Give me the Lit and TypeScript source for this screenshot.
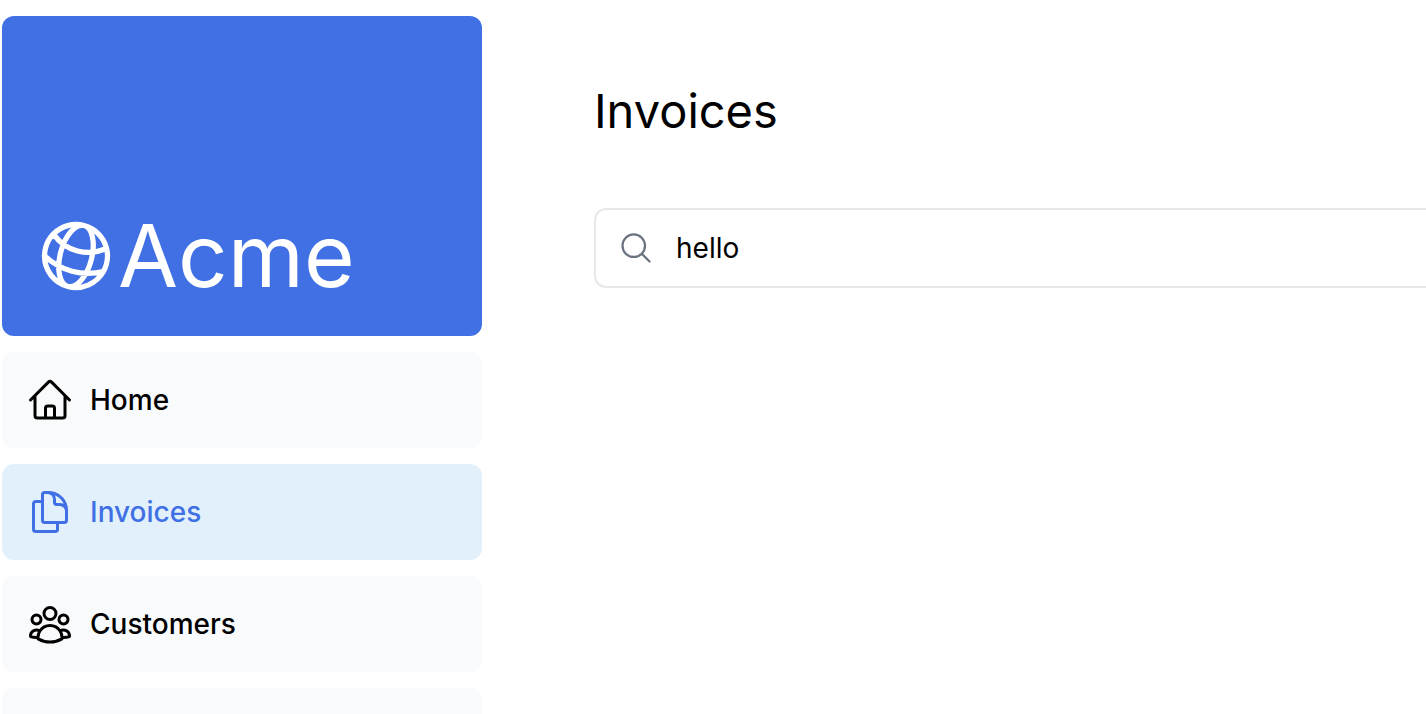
import { LitElement, html, css, svg } from 'lit';
import { customElement } from 'lit/decorators.js';
import { classMap } from 'lit/directives/class-map.js';

const icon = (name: string, paths: string[]) => html`
  <svg class="icon ${name}" viewBox="0 0 24 24" fill="none" stroke="currentColor" stroke-width="1.5"
    stroke-linecap="round" stroke-linejoin="round" aria-hidden="true">
    ${paths.map((d) => svg`<path d=${d}></path>`)}
  </svg>`;

const GLOBE = [
  'M12 21a9.004 9.004 0 0 0 8.716-6.747M12 21a9.004 9.004 0 0 1-8.716-6.747M12 21c2.485 0 4.5-4.03 4.5-9S14.485 3 12 3m0 18c-2.485 0-4.5-4.03-4.5-9S9.515 3 12 3m0 0a8.997 8.997 0 0 1 7.843 4.582M12 3a8.997 8.997 0 0 0-7.843 4.582m15.686 0A11.953 11.953 0 0 1 12 10.5c-2.998 0-5.74-1.1-7.843-2.918m15.686 0A8.959 8.959 0 0 1 21 12c0 .778-.099 1.533-.284 2.253m0 0A17.919 17.919 0 0 1 12 16.5c-3.162 0-6.133-.815-8.716-2.247m0 0A9.015 9.015 0 0 1 3 12c0-1.605.42-3.113 1.157-4.418',
];
const SEARCH = ['m21 21-5.197-5.197m0 0A7.5 7.5 0 1 0 5.196 5.196a7.5 7.5 0 0 0 10.607 10.607Z'];

const LINKS = [
  {
    label: 'Home', href: '#home',
    icon: ['m2.25 12 8.954-8.955c.44-.439 1.152-.439 1.591 0L21.75 12M4.5 9.75v10.125c0 .621.504 1.125 1.125 1.125H9.75v-4.875c0-.621.504-1.125 1.125-1.125h2.25c.621 0 1.125.504 1.125 1.125V21h4.125c.621 0 1.125-.504 1.125-1.125V9.75M8.25 21h8.25'],
  },
  {
    label: 'Invoices', href: '#invoices', active: true,
    icon: ['M15.75 17.25v3.375c0 .621-.504 1.125-1.125 1.125h-9.75a1.125 1.125 0 0 1-1.125-1.125V7.875c0-.621.504-1.125 1.125-1.125H6.75a9.06 9.06 0 0 1 1.5.124m7.5 10.376h3.375c.621 0 1.125-.504 1.125-1.125V11.25c0-4.46-3.243-8.161-7.5-8.876a9.06 9.06 0 0 0-1.5-.124H9.375c-.621 0-1.125.504-1.125 1.125v3.5m7.5 10.375H9.375a1.125 1.125 0 0 1-1.125-1.125v-9.25m12 6.625v-1.875a3.375 3.375 0 0 0-3.375-3.375h-1.5a1.125 1.125 0 0 1-1.125-1.125v-1.5a3.375 3.375 0 0 0-3.375-3.375H9.75'],
  },
  {
    label: 'Customers', href: '#customers',
    icon: ['M18 18.72a9.094 9.094 0 0 0 3.741-.479 3 3 0 0 0-4.682-2.72m.94 3.198.001.031c0 .225-.012.447-.037.666A11.944 11.944 0 0 1 12 21c-2.17 0-4.207-.576-5.963-1.584A6.062 6.062 0 0 1 6 18.719m12 0a5.971 5.971 0 0 0-.941-3.197m0 0A5.995 5.995 0 0 0 12 12.75a5.995 5.995 0 0 0-5.058 2.772m0 0a3 3 0 0 0-4.681 2.72 8.986 8.986 0 0 0 3.74.477m.94-3.197a5.971 5.971 0 0 0-.94 3.197M15 6.75a3 3 0 1 1-6 0 3 3 0 0 1 6 0Zm6 3a2.25 2.25 0 1 1-4.5 0 2.25 2.25 0 0 1 4.5 0Zm-13.5 0a2.25 2.25 0 1 1-4.5 0 2.25 2.25 0 0 1 4.5 0Z'],
  },
];

@customElement('app-root')
export class AppRoot extends LitElement {
  static styles = css`
    :host {
      display: flex;
      height: 100vh;
      overflow: hidden;
      background: #fff;
      color: #000;
      font-family: Inter, sans-serif;
      font-size: 28px;
      line-height: 40px;
    }
    * { box-sizing: border-box; }
    .sidebar {
      display: flex;
      flex-direction: column;
      flex: none;
      gap: 16px;
      width: 482px;
      padding: 16px 0 0 2px;
    }
    .brand {
      display: flex;
      align-items: flex-end;
      flex: none;
      height: 320px;
      padding: 32px;
      border-radius: 12px;
      background: #4070e4;
      color: #fff;
      text-decoration: none;
    }
    .logo {
      display: flex;
      align-items: center;
      font-size: 87px;
      line-height: 96px;
    }
    nav {
      display: flex;
      flex-direction: column;
      flex: 1;
      gap: 16px;
    }
    .link {
      display: flex;
      align-items: center;
      flex: none;
      gap: 16px;
      height: 96px;
      padding: 0 24px;
      border-radius: 12px;
      background: #f9fafb;
      color: inherit;
      font-weight: 500;
      text-decoration: none;
    }
    .active {
      background: #e2f0fc;
      color: #4070e4;
    }
    .icon { flex: none; width: 48px; height: 48px; }
    .globe { width: 84px; height: 84px; transform: rotate(15deg); }
    main {
      flex: 1;
      min-width: 0;
      padding: 80px 0 0 112px;
    }
    h1 {
      margin: 0 0 66px;
      font-size: 47px;
      line-height: 62px;
      font-weight: 400;
    }
    .search {
      display: flex;
      align-items: center;
      gap: 22px;
      height: 80px;
      padding-left: 22px;
      border: 2px solid #e5e7eb;
      border-right: 0;
      border-radius: 12px 0 0 12px;
    }
    .glass { width: 36px; height: 36px; color: #6b7280; }
    input {
      flex: 1;
      min-width: 0;
      padding: 0;
      border: 0;
      outline: 0;
      background: none;
      color: inherit;
      font: inherit;
    }
  `;

  render() {
    return html`
      <aside class="sidebar">
        <a class="brand" href="#top">
          <span class="logo">${icon('globe', GLOBE)}<span>Acme</span></span>
        </a>
        <nav>
          ${LINKS.map((l) => html`
            <a class=${classMap({ link: true, active: !!l.active })} href=${l.href}>
              ${icon('', l.icon)}<span>${l.label}</span>
            </a>`)}
          <div class="link"></div>
        </nav>
      </aside>
      <main>
        <h1>Invoices</h1>
        <label class="search">
          ${icon('glass', SEARCH)}
          <input type="text" aria-label="Search invoices" .value=${'hello'} />
        </label>
      </main>
    `;
  }
}
